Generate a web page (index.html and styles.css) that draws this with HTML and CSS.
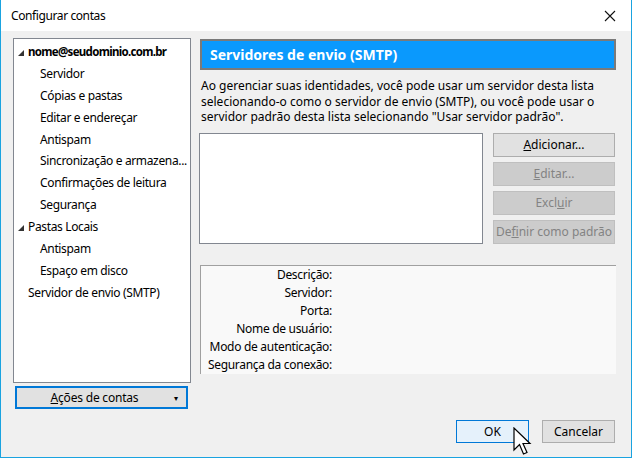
FILE: index.html
```html
<!DOCTYPE html>
<html lang="pt-BR">
<head>
<meta charset="utf-8">
<title>Configurar contas</title>
<link rel="stylesheet" href="styles.css">
</head>
<body>
<div class="window">
  <div class="titlebar">
    <span class="title">Configurar contas</span>
    <svg class="close" width="12" height="12" viewBox="0 0 12 12"><path d="M1 1 L11 11 M11 1 L1 11" stroke="#111" stroke-width="1.1" fill="none"/></svg>
  </div>
  <div class="content">
    <div class="leftcol">
      <ul class="tree">
        <li class="node bold"><svg class="tri" width="6" height="6" viewBox="0 0 6 6"><polygon points="6,0 6,6 0,6" fill="#333"/></svg>nome@seudominio.com.br</li>
        <li class="child">Servidor</li>
        <li class="child">Cópias e pastas</li>
        <li class="child">Editar e endereçar</li>
        <li class="child">Antispam</li>
        <li class="child">Sincronização e armazena...</li>
        <li class="child">Confirmações de leitura</li>
        <li class="child">Segurança</li>
        <li class="node"><svg class="tri" width="6" height="6" viewBox="0 0 6 6"><polygon points="6,0 6,6 0,6" fill="#333"/></svg>Pastas Locais</li>
        <li class="child">Antispam</li>
        <li class="child">Espaço em disco</li>
        <li class="node">Servidor de envio (SMTP)</li>
      </ul>
      <div class="actions-btn"><span class="actions-label"><u>A</u>ções de contas</span><span class="caret">▾</span></div>
    </div>
    <div class="rightcol">
      <div class="header">Servidores de envio (SMTP)</div>
      <p class="desc">Ao gerenciar suas identidades, você pode usar um servidor desta lista selecionando-o como o servidor de envio (SMTP), ou você pode usar o servidor padrão desta lista selecionando "Usar servidor padrão".</p>
      <div class="listrow">
        <div class="listbox"></div>
        <div class="btncol">
          <div class="btn"><u>A</u>dicionar...</div>
          <div class="btn disabled"><u>E</u>ditar...</div>
          <div class="btn disabled">Excl<u>u</u>ir</div>
          <div class="btn disabled">De<u>f</u>inir como padrão</div>
        </div>
      </div>
      <div class="details">
        <div class="lbl">Descrição:</div>
        <div class="lbl">Servidor:</div>
        <div class="lbl">Porta:</div>
        <div class="lbl">Nome de usuário:</div>
        <div class="lbl">Modo de autenticação:</div>
        <div class="lbl">Segurança da conexão:</div>
      </div>
    </div>
  </div>
  <div class="footer">
    <div class="btn fbtn ok">OK</div>
    <div class="btn fbtn">Cancelar</div>
  </div>
  <svg class="cursor" width="20" height="32" viewBox="0 0 20 32"><path d="M1 1 L1 23 L6.5 17.5 L10.5 27 L14 25.5 L10 16.5 L17 16.5 Z" fill="#fff" stroke="#000" stroke-width="1.2" stroke-linejoin="miter"/></svg>
</div>
</body>
</html>
```

FILE: styles.css
```css
* { box-sizing: border-box; }
html, body { margin: 0; padding: 0; }
body {
  font-family: "Noto Sans", "Liberation Sans", sans-serif;
  font-size: 12px;
  color: #000;
  background: #f0f0f0;
}
.window {
  position: relative;
  width: 632px;
  height: 458px;
  border: 1px solid #1aa3e0;
  border-top: 0;
  background: #f0f0f0;
  overflow: hidden;
}
.titlebar {
  height: 31px;
  background: #fff;
  display: flex;
  align-items: center;
  justify-content: space-between;
  padding: 0 15px 0 10px;
}
.title { font-size: 12px; line-height: 16px; letter-spacing: -0.4px; }
.close { display: block; }
.content {
  display: flex;
  padding: 7px 15px 0 12px;
  gap: 9px;
}
.leftcol { width: 178px; display: flex; flex-direction: column; }
.tree {
  list-style: none;
  margin: 0;
  padding: 2px 0 0 0;
  height: 345px;
  background: #fff;
  border: 1px solid #828790;
}
.tree li {
  height: 21.9px;
  line-height: 22px;
  white-space: nowrap;
  overflow: hidden;
  letter-spacing: -0.35px;
}
.node { padding-left: 14px; position: relative; }
.node .tri { position: absolute; left: 4px; top: 9px; }
.tree li.bold { font-weight: bold; letter-spacing: -0.7px; font-size: 11.5px; }
.child { padding-left: 26px; }
.actions-btn {
  margin: 3px 0 0 2px;
  width: 173px;
  height: 23px;
  border: 2px solid #0078d7;
  background: #e1e1e1;
  display: flex;
  align-items: center;
  position: relative;
}
.actions-label { flex: 1; text-align: center; padding-right: 14px; letter-spacing: -0.2px; }
.caret { position: absolute; right: 8px; top: 2px; font-size: 8px; line-height: 16px; }
.rightcol { width: 416px; display: flex; flex-direction: column; }
.header {
  margin-top: 1px;
  height: 31px;
  background: #0a99fd;
  border: 2px solid #7a7a7a;
  color: #fff;
  font-weight: bold;
  font-size: 14px;
  line-height: 27px;
  padding-left: 8px;
}
.desc {
  margin: 8px 0 0 1px;
  line-height: 15.5px;
  height: 47px;
}
.listrow {
  display: flex;
  margin-top: 8px;
  gap: 10px;
}
.listbox {
  width: 284px;
  height: 111px;
  background: #fff;
  border: 1px solid #828790;
  margin-left: -1px;
}
.btncol { display: flex; flex-direction: column; gap: 5px; width: 122px; }
.btn {
  height: 24px;
  border: 1px solid #adadad;
  background: #e1e1e1;
  text-align: center;
  line-height: 22px;
  white-space: nowrap;
}
.btn.disabled { background: #cccccc; border-color: #bfbfbf; color: #838383; }
.details {
  margin-top: 21px;
  height: 109px;
  background: #f9f9f9;
  border-top: 1px solid #a0a0a0;
  border-left: 1px solid #a0a0a0;
  padding-top: 0;
}
.lbl {
  width: 131px;
  text-align: right;
  height: 18px;
  line-height: 18px;
  white-space: nowrap;
  letter-spacing: -0.3px;
}
.footer {
  display: flex;
  justify-content: flex-end;
  gap: 13px;
  margin-top: 11px;
  padding-right: 16px;
}
.fbtn { width: 73px; height: 23px; line-height: 21px; }
.ok { background: #e5f1fb; border-color: #0078d7; }
.cursor { position: absolute; left: 512px; top: 427px; }
```
